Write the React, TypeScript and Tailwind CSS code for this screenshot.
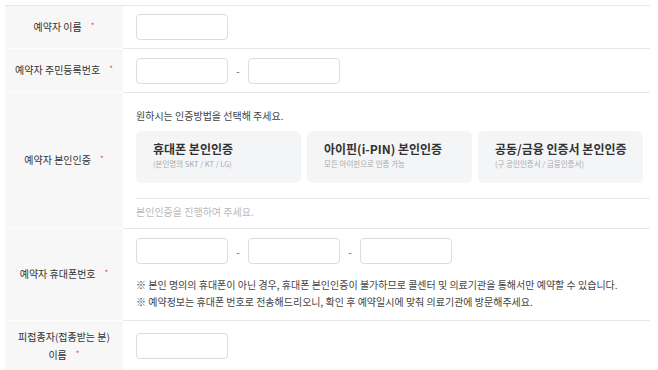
import React from 'react';

const FONT = { fontFamily: '"Noto Sans CJK KR", "Noto Sans", sans-serif' };

function Star() {
  return <span className="ml-[9px] text-[8px] text-[#e0464b] relative -top-[2px]">*</span>;
}

function Field() {
  return <div className="w-[92px] h-[26px] rounded-[4px] border border-[#dcdcdc] bg-white" />;
}

function Dash() {
  return <span className="w-[20px] text-center text-[10px] text-[#555]">-</span>;
}

function Label({ children }: { children: React.ReactNode }) {
  return (
    <div className="w-[118px] shrink-0 bg-[#f7f7f8] border-b border-[#fcfcfc] flex items-center justify-center text-center text-[10px] leading-[18px] text-[#333]">
      <div>{children}</div>
    </div>
  );
}

const METHODS = [
  { title: '휴대폰 본인인증', sub: '(본인명의 SKT / KT / LG)' },
  { title: '아이핀(i-PIN) 본인인증', sub: '모든 아이핀으로 인증 가능' },
  { title: '공동/금융 인증서 본인인증', sub: '(구 공인인증서 / 금융인증서)' },
];

export default function App() {
  return (
    <div className="w-[658px] h-[370px] overflow-hidden bg-white pt-[5px] pl-[5px]" style={FONT}>
      <div className="w-[645px] border-t border-[#e8e8e8]">
        {/* 예약자 이름 */}
        <div className="flex h-[43px]">
          <Label>예약자 이름<Star /></Label>
          <div className="flex-1 flex items-center pl-[13px] border-b border-[#e8e8e8]">
            <Field />
          </div>
        </div>

        {/* 주민등록번호 */}
        <div className="flex h-[44px]">
          <Label>예약자 주민등록번호<Star /></Label>
          <div className="flex-1 flex items-center pl-[13px] border-b border-[#e8e8e8]">
            <Field />
            <Dash />
            <Field />
          </div>
        </div>

        {/* 본인인증 */}
        <div className="flex">
          <Label>예약자 본인인증<Star /></Label>
          <div className="flex-1 pl-[13px] pt-[16px] pb-[9px] border-b border-[#e8e8e8]">
            <p className="text-[10px] leading-[14px] text-[#444]">원하시는 인증방법을 선택해 주세요.</p>
            <div className="mt-[8px] w-[507px] grid grid-cols-3 gap-[6px]">
              {METHODS.map((m) => (
                <div key={m.title} className="h-[52px] rounded-[6px] bg-[#f4f5f6] pl-[17px] pt-[9px]">
                  <div className="text-[12px] leading-[17px] font-bold text-[#333]">{m.title}</div>
                  <div className="mt-[2px] text-[7.5px] leading-[10px] text-[#aaa]">{m.sub}</div>
                </div>
              ))}
            </div>
            <div className="mt-[15px] border-t border-[#e8e8e8]" />
            <p className="pt-[6px] text-[10px] leading-[14px] text-[#b8b8b8]">본인인증을 진행하여 주세요.</p>
          </div>
        </div>

        {/* 휴대폰번호 */}
        <div className="flex">
          <Label>예약자 휴대폰번호<Star /></Label>
          <div className="flex-1 pl-[13px] pt-[9px] pb-[10px] border-b border-[#e8e8e8]">
            <div className="flex items-center">
              <Field />
              <Dash />
              <Field />
              <Dash />
              <Field />
            </div>
            <div className="mt-[12px] text-[10px] leading-[17px] text-[#444]">
              <p>※ 본인 명의의 휴대폰이 아닌 경우, 휴대폰 본인인증이 불가하므로 콜센터 및 의료기관을 통해서만 예약할 수 있습니다.</p>
              <p>※ 예약정보는 휴대폰 번호로 전송해드리오니, 확인 후 예약일시에 맞춰 의료기관에 방문해주세요.</p>
            </div>
          </div>
        </div>

        {/* 피접종자 이름 */}
        <div className="flex h-[51px]">
          <Label>
            피접종자(접종받는 분)
            <br />
            이름<Star />
          </Label>
          <div className="flex-1 flex items-center pl-[13px] border-b border-[#e8e8e8]">
            <Field />
          </div>
        </div>
      </div>
    </div>
  );
}
